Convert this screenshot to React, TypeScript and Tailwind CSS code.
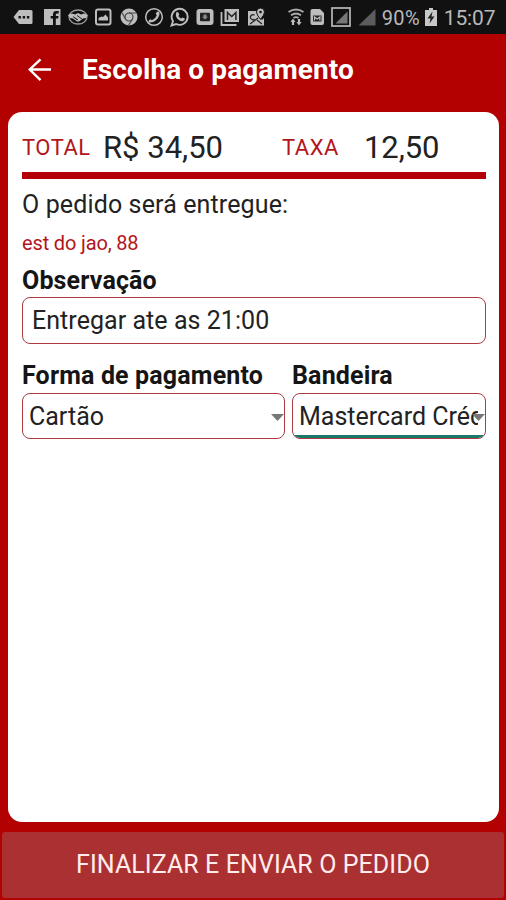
/*
React Dependencies
*/
import React from 'react';

const FONT = "font-['Roboto','Noto_Sans',sans-serif]";

/*
Status bar glyphs, all drawn on a 20x20 grid
*/
const Glyph: React.FC<{ children: React.ReactNode; className?: string }> = ({
    children,
    className = '',
}) => (
    <svg viewBox="0 0 20 20" className={`h-5 w-5 shrink-0 ${className}`} fill="#bdbdbd">
        {children}
    </svg>
);

const NotificationIcons: React.FC = () => (
    <div className="flex items-center gap-[5.4px]">
        <Glyph className="mr-[3.6px]">
            <path d="M6 3h12q1.500 0 1.500 1.500v11q0 1.500-1.500 1.500H6L.5 10z" />
            <path d="M5.500 9h2.400v2.400H5.500zM9.700 9h2.400v2.400H9.700zM13.900 9h2.400v2.400h-2.400z" fill="#111" />
        </Glyph>
        <Glyph className="mr-[0.6px]">
            <path d="M2 2h16.500v16H2z" />
            <path d="M11 18v-6.500H8.700V9H11V7.200Q11 4 14.500 4h2.200v2.500h-1.500Q13.800 6.500 13.800 7.800V9h2.800l-.5 2.500h-2.300V18z" fill="#111" />
        </Glyph>
        <Glyph>
            <ellipse cx="10" cy="10" rx="9" ry="7" fill="none" stroke="#999" strokeWidth="1.300" />
            <path d="M0 8l4-1.500 3 1 3-1.500 3 1.500 3-1L20 8l-2 3-3 .5-4 3H9l-4-3-3-.5z" />
            <path d="M5 9.500l4 3M9 8.500l5 3.500M7 11l3 2" stroke="#222" strokeWidth="1" fill="none" />
        </Glyph>
        <Glyph>
            <rect x="3" y="2.500" width="14.500" height="15" rx="2" fill="none" stroke="#bdbdbd" strokeWidth="2" />
            <path d="M5.500 13.500V11l3-1.500L10 10l2.500-2.500 2.500 3v3z" />
        </Glyph>
        <Glyph>
            <circle cx="10" cy="10" r="8.500" />
            <circle cx="10" cy="10" r="4" fill="#bdbdbd" stroke="#444" strokeWidth="1.200" />
            <path d="M10 6h7.500M6.500 12L3 5.800M13.500 12L9.700 18" stroke="#444" strokeWidth="1.100" />
        </Glyph>
        <Glyph>
            <circle cx="10" cy="10" r="8.300" fill="none" stroke="#bdbdbd" strokeWidth="1.500" />
            <path d="M5 15.500q-1-1 0-2.200l1.400-1 1.600 1q3.500-1.300 4.800-5L11.700 6.700 13 4.800q1.300-.8 2.400.4.700 3-2.200 6.800Q9.500 16 5 15.500z" />
        </Glyph>
        <Glyph>
            <path d="M1.500 18.500l1.500-4.300A8 8 0 1 1 6.200 17z" fill="none" stroke="#bdbdbd" strokeWidth="1.900" />
            <path d="M6.200 5.500q1-1 2-.3l1.100 2.500-.9 1.400q1 1.700 2.700 2.500l1.200-1.200 2.500 1.200q.4 2.300-1.900 2.700-2.800.3-5.300-2.300T6.200 5.500z" />
        </Glyph>
        <Glyph>
            <rect x="1.500" y="2" width="17" height="16" rx="3" />
            <rect x="5" y="5.800" width="10" height="8.500" rx="1" fill="#222" />
            <path d="M8.500 7.500h3v2.300h1.500L10 12.500 7 9.800h1.500z" fill="#888" />
        </Glyph>
        <Glyph>
            <path d="M4.500 2h14.500v13H4.500z" />
            <path d="M1.500 5v13h15" fill="none" stroke="#bdbdbd" strokeWidth="1.800" />
            <path d="M7.500 13V5.500l4.200 4 4.200-4V13" fill="none" stroke="#222" strokeWidth="1.500" />
        </Glyph>
        <Glyph>
            <path d="M2 4h9l2 6 3 3 2-2v7.500H2z" />
            <path d="M14.500 1a4 4 0 0 1 4 4q0 2.500-4 7.500-4-5-4-7.500a4 4 0 0 1 4-4z" stroke="#111" strokeWidth="1" />
            <circle cx="14.500" cy="5" r="1.300" fill="#111" />
            <path d="M8.500 8.200a2.500 2.500 0 1 0 0 4M4 17l8-6M11 13l5 4" fill="none" stroke="#222" strokeWidth="1.200" />
        </Glyph>
    </div>
);

const SystemIcons: React.FC = () => (
    <div className="flex items-center">
        <Glyph className="mr-[1px]">
            <path d="M2.500 5q7.500-5 15 0M5 8.200q5-3.500 10 0M7.500 11q2.500-1.800 5 0" fill="none" stroke="#aaa" strokeWidth="1.900" />
            <path d="M7 18v-5M13 12v5" fill="none" stroke="#bdbdbd" strokeWidth="2.200" />
            <path d="M4.500 15L7 11.500 9.500 15zM10.500 15l2.500 3.500 2.500-3.500z" />
        </Glyph>
        <Glyph className="mr-[4px]">
            <path d="M3.500 4q0-2 2-2h7.500l4 4v10q0 2-2 2H5.500q-2 0-2-2z" />
            <path d="M6 8.500h8.500v6H6z" fill="#222" />
            <path d="M7.500 13.500V10l2.700 2 2.700-2v3.500" fill="none" stroke="#bdbdbd" strokeWidth="1.200" />
        </Glyph>
        <Glyph className="mr-[6px]">
            <rect x="1" y="1" width="18" height="18" fill="none" stroke="#b0b0b0" strokeWidth="1.800" />
            <path d="M16.500 4.500v12h-12z" fill="#777" />
        </Glyph>
        <Glyph>
            <path d="M18.500 2v16.500H1.500z" fill="#5c5c5c" />
        </Glyph>
    </div>
);

const StatusBar: React.FC = () => (
    <div className="flex h-[34px] items-center bg-[#111] pl-[13px] text-[#b9b9b9]">
        <NotificationIcons />
        <div className="w-[20px]" />
        <SystemIcons />
        <span className="ml-[5px] w-[41px] pt-[2px] text-[20px] leading-none tracking-[0.4px] whitespace-nowrap">90%</span>
        <svg viewBox="0 0 12 18" className="mr-[7px] ml-[2px] h-[18px] w-3 shrink-0" fill="#c8c8c8">
            <path d="M4 0h4v2h4v16H0V2h4z" />
            <path d="M7.500 3.500L2.500 10.500h3L4.500 15.500 9.500 8.500h-3z" fill="#222" />
        </svg>
        <span className="pt-[2px] text-[21px] leading-none tracking-[-0.1px] whitespace-nowrap">15:07</span>
    </div>
);

const Header: React.FC = () => (
    <header className="flex h-[78px] items-center pb-[7px] pl-7 text-white">
        <svg viewBox="0 0 24 24" className="h-6 w-6" fill="none" stroke="currentColor" strokeWidth="2.400">
            <path d="M23 11.500H2M12.500 1.300L1.700 11.500l10.800 10.700" />
        </svg>
        <h1 className="ml-[30px] text-[28px] leading-8 font-bold tracking-[0.1px] whitespace-nowrap">
            Escolha o pagamento
        </h1>
    </header>
);

const Label: React.FC<{ children: React.ReactNode }> = ({ children }) => (
    <div className="mb-[1px] text-[25px] leading-8 font-bold tracking-[0.15px] whitespace-nowrap text-[#151515]">
        {children}
    </div>
);

const Caret: React.FC = () => (
    <svg viewBox="0 0 13 7" className="h-[7px] w-[13px]" fill="#777">
        <path d="M0 0h13L6.500 7z" />
    </svg>
);

const Select: React.FC<{ value: string; focused?: boolean }> = ({ value, focused }) => (
    <div className="relative flex h-[46px] items-center overflow-hidden rounded-lg border border-[#ad3a40] pl-[6px]">
        <span className="w-[179px] overflow-hidden pt-px text-[25px] leading-8 whitespace-nowrap">
            {value}
        </span>
        <span className="absolute top-[20px] right-0">
            <Caret />
        </span>
        {focused && <span className="absolute inset-x-0 bottom-0 h-[3px] bg-[#18796a]" />}
    </div>
);

const App: React.FC = () => {
    return (
        <div className={`flex h-[900px] w-[506px] flex-col overflow-hidden bg-[#b30000] text-[#222] ${FONT}`}>
            <StatusBar />
            <Header />
            <main className="mr-[7px] ml-2 flex h-[710px] flex-col rounded-[14px] bg-white pr-[13px] pl-[14px]">
                <div className="flex h-[60px] items-center pt-[11px]">
                    <span className="w-[81px] text-[22px] tracking-[0.5px] text-[#b3151c]">TOTAL</span>
                    <span className="w-[179px] pt-[2px] text-[31px]">R$ 34,50</span>
                    <span className="w-[82px] text-[22px] tracking-[0.5px] text-[#b3151c]">TAXA</span>
                    <span className="pt-[2px] text-[31px] tracking-[-0.1px]">12,50</span>
                </div>
                <div className="h-[7px] shrink-0 bg-[#b30008]" />
                <p className="mt-[10px] text-[25px] leading-8 tracking-[0.13px]">O pedido será entregue:</p>
                <p className="mt-[10px] text-[20px] leading-6 tracking-[-0.15px] text-[#b3151c]">est do jao, 88</p>
                <div className="mt-[10px] -mb-px">
                    <Label>Observação</Label>
                </div>
                <div className="flex h-[47px] shrink-0 items-center rounded-lg border border-[#ad3a40] pl-[9px] text-[25px] tracking-[0.05px]">
                    Entregar ate as 21:00
                </div>
                <div className="mt-[16px] grid grid-cols-[263px_194px] gap-[7px]">
                    <div>
                        <Label>Forma de pagamento</Label>
                        <Select value="Cartão" />
                    </div>
                    <div>
                        <Label>Bandeira</Label>
                        <Select value="Mastercard Crédito" focused />
                    </div>
                </div>
            </main>
            <button className="mx-[2px] mt-[10px] h-[66px] shrink-0 rounded-[3px] bg-[#aa3032] text-[25px] tracking-[0.08px] text-[#ffecec]">
                FINALIZAR E ENVIAR O PEDIDO
            </button>
        </div>
    );
};

export default App;
